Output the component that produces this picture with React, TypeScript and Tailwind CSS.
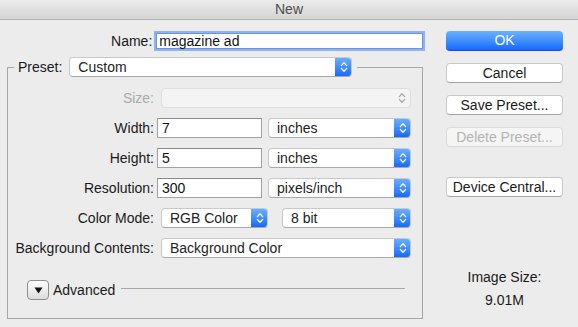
import React from "react";

const font = { fontFamily: '"Liberation Sans", Arial, sans-serif' };

function Chevrons({ color = "white" }: { color?: string }) {
  return (
    <svg width="8" height="12" viewBox="0 0 8 12" fill="none">
      <path d="M1.3 4.6 L4 1.8 L6.7 4.6" stroke={color} strokeWidth="1.3" strokeLinecap="round" strokeLinejoin="round" />
      <path d="M1.3 7.4 L4 10.2 L6.7 7.4" stroke={color} strokeWidth="1.3" strokeLinecap="round" strokeLinejoin="round" />
    </svg>
  );
}

function Popup({ label, className }: { label: string; className: string }) {
  return (
    <div className={`flex h-[20px] shrink-0 rounded-[4px] bg-white border border-[#c9c9c9] border-b-[#a8a8a8] overflow-hidden ${className}`}>
      <div className="flex-1 flex items-center pl-[8px] text-[14px] leading-[17px] text-[#222]">{label}</div>
      <div className="w-[17px] -my-px -mr-px flex items-center justify-center bg-gradient-to-b from-[#6cb2fb] to-[#1669fb] border-b border-[#2c3ff2] rounded-r-[4px]">
        <Chevrons />
      </div>
    </div>
  );
}

function Field({ value, className }: { value: string; className: string }) {
  return (
    <div className={`h-[20px] shrink-0 bg-white border border-[#a2a2a2] border-t-[#8b8b8b] flex items-center pl-[4px] text-[14px] leading-[17px] text-[#111] ${className}`}>
      {value}
    </div>
  );
}

function Row({ label, children, gray }: { label: string; children: React.ReactNode; gray?: boolean }) {
  return (
    <div className="flex h-[20px] items-center">
      <div className={`w-[146px] shrink-0 text-right text-[14px] leading-[17px] ${gray ? "text-[#a9a9a9]" : "text-[#1a1a1a]"}`}>{label}</div>
      {children}
    </div>
  );
}

function Btn({ label, disabled }: { label: string; disabled?: boolean }) {
  return (
    <div
      className={`h-[20px] w-[117px] rounded-[4px] border flex items-center justify-center text-[14px] leading-[17px] ${
        disabled
          ? "bg-[#f5f5f5] border-[#dadada] text-[#b3b3b3]"
          : "bg-white border-[#c8c8c8] border-b-[#a6a6a6] text-[#1a1a1a]"
      }`}
    >
      {label}
    </div>
  );
}

export default function App() {
  return (
    <div className="w-[578px] h-[327px] bg-[#ececec] overflow-hidden flex flex-col" style={font}>
      <div className="h-[20px] shrink-0 bg-gradient-to-b from-[#ebebeb] to-[#d5d5d5] border-b border-[#b4b4b4] flex items-center justify-center text-[14px] leading-[17px] text-[#4d4d4d]">
        New
      </div>
      <div className="flex flex-1 pl-[7px]">
        {/* left column */}
        <div className="w-[416px] shrink-0 pt-[11px] flex flex-col">
          <div className="flex h-[20px] items-center">
            <div className="w-[146px] text-right text-[14px] leading-[17px] text-[#1a1a1a]">Name:</div>
            <div className="ml-[4px] w-[268px] h-[16px] bg-white border border-[#6d94d6] shadow-[0_0_0_2px_#8fb3ee] flex items-center pl-[2px] text-[14px] leading-[17px] text-[#111]">
              magazine ad
            </div>
          </div>
          <fieldset className="mt-[6px] w-[416px] border border-[#a6a6a6] pt-[11px] pb-[18px]">
            <legend className="ml-[6px] pl-[4px] pr-[5px]">
              <div className="flex items-center h-[20px]">
                <span className="text-[14px] leading-[17px] text-[#1a1a1a]">Preset:</span>
                <Popup label="Custom" className="ml-[7px] w-[283px]" />
              </div>
            </legend>
            <div className="flex flex-col gap-[10px]">
              <Row label="Size:" gray>
                <div className="ml-[7px] w-[250px] h-[20px] rounded-[4px] bg-[#f4f4f4] border border-[#dedede] flex justify-end items-center pr-[4px]">
                  <Chevrons color="#a8a8a8" />
                </div>
              </Row>
              <Row label="Width:">
                <Field value="7" className="ml-[3px] w-[105px]" />
                <Popup label="inches" className="ml-[6px] w-[143px]" />
              </Row>
              <Row label="Height:">
                <Field value="5" className="ml-[3px] w-[105px]" />
                <Popup label="inches" className="ml-[6px] w-[143px]" />
              </Row>
              <Row label="Resolution:">
                <Field value="300" className="ml-[3px] w-[105px]" />
                <Popup label="pixels/inch" className="ml-[6px] w-[143px]" />
              </Row>
              <Row label="Color Mode:">
                <Popup label="RGB Color" className="ml-[7px] w-[107px]" />
                <Popup label="8 bit" className="ml-[14px] w-[129px]" />
              </Row>
              <Row label="Background Contents:">
                <Popup label="Background Color" className="ml-[7px] w-[250px]" />
              </Row>
            </div>
            <div className="mt-[22px] flex h-[20px] items-center pl-[19px] pr-[17px]">
              <div className="w-[22px] h-[20px] rounded-[4px] border border-[#8e8e8e] bg-gradient-to-b from-white to-[#dcdcdc] flex items-center justify-center">
                <svg width="9" height="7" viewBox="0 0 9 7">
                  <path d="M0.5 0.5 L8.5 0.5 L4.5 6.5 Z" fill="#111" />
                </svg>
              </div>
              <span className="ml-[4px] text-[14px] leading-[17px] text-[#1a1a1a]">Advanced</span>
              <div className="ml-[6px] flex-1 h-px bg-[#a8a8a8] mb-[3px]" />
            </div>
          </fieldset>
        </div>
        {/* right column */}
        <div className="ml-[23px] w-[117px] pt-[11px] flex flex-col">
          <div className="h-[20px] w-[117px] rounded-[4px] bg-gradient-to-b from-[#6bb1fb] to-[#1269fc] border-b border-[#2b3ff3] flex items-center justify-center text-[14px] leading-[17px] text-white">
            OK
          </div>
          <div className="mt-[12px]"><Btn label="Cancel" /></div>
          <div className="mt-[12px]"><Btn label="Save Preset..." /></div>
          <div className="mt-[12px]"><Btn label="Delete Preset..." disabled /></div>
          <div className="mt-[30px]"><Btn label="Device Central..." /></div>
          <div className="mt-[72px] text-center text-[14px] leading-[17px] text-[#1a1a1a]">Image Size:</div>
          <div className="mt-[6px] text-center text-[14px] leading-[17px] text-[#1a1a1a]">9.01M</div>
        </div>
      </div>
    </div>
  );
}
